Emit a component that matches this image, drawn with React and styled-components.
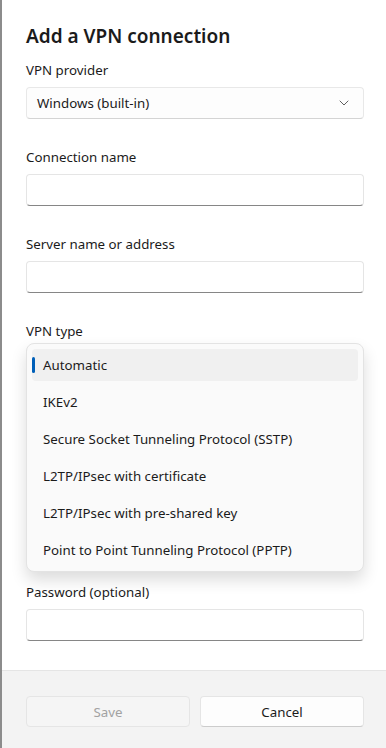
import React from 'react';
import styled, { createGlobalStyle } from 'styled-components';

const vpnTypes = [
  'Automatic',
  'IKEv2',
  'Secure Socket Tunneling Protocol (SSTP)',
  'L2TP/IPsec with certificate',
  'L2TP/IPsec with pre-shared key',
  'Point to Point Tunneling Protocol (PPTP)',
];

const GlobalStyle = createGlobalStyle`
  html, body {
    margin: 0;
    padding: 0;
    background: #ffffff;
  }
  body {
    font-family: "Segoe UI", "Noto Sans", "Open Sans", sans-serif;
    color: #1b1b1b;
  }
`;

const Dialog = styled.div`
  display: flex;
  flex-direction: column;
  height: 748px;
  border-left: 2px solid #8c8c8c;
  box-sizing: border-box;
  background: #ffffff;
`;

const Body = styled.div`
  position: relative;
  flex: 1;
  padding: 22px 22px 0 24px;
`;

const Title = styled.h1`
  margin: 0 0 10px;
  font-size: 19px;
  line-height: 28px;
  font-weight: 600;
`;

// fields under the open menu stay in the flow but are not painted
const Field = styled.div`
  display: flex;
  flex-direction: column;
  margin-bottom: 28px;
  visibility: ${(p) => (p.$covered ? 'hidden' : 'visible')};
`;

const Label = styled.label`
  font-size: 13.3px;
  line-height: 20px;
  margin-bottom: 7px;
`;

const TextBox = styled.div`
  height: 32px;
  box-sizing: border-box;
  border: 1px solid #e5e5e5;
  border-bottom: 1px solid #868686;
  border-radius: 4px;
  background: #ffffff;
`;

const Select = styled.div`
  display: flex;
  align-items: center;
  justify-content: space-between;
  height: 32px;
  box-sizing: border-box;
  padding: 0 14px 0 10px;
  border: 1px solid #e8e8e8;
  border-bottom-color: #d4d4d4;
  border-radius: 4px;
  background: #fdfdfd;
  font-size: 13.3px;
`;

const Menu = styled.div`
  position: absolute;
  left: 24px;
  right: 22px;
  top: 343px;
  padding: 5px;
  border: 1px solid #e3e3e3;
  border-radius: 8px;
  background: #fafafa;
  box-shadow: 0 8px 16px rgba(0, 0, 0, 0.14);
  display: flex;
  flex-direction: column;
  gap: 5px;
`;

const MenuItem = styled.div`
  position: relative;
  height: 32px;
  display: flex;
  align-items: center;
  padding-left: 11px;
  border-radius: 4px;
  font-size: 13.3px;
  background: ${(p) => (p.$selected ? '#f0f0f0' : 'transparent')};

  &::before {
    content: '';
    display: ${(p) => (p.$selected ? 'block' : 'none')};
    position: absolute;
    left: 0;
    top: 8px;
    width: 3px;
    height: 16px;
    border-radius: 2px;
    background: #005fb8;
  }
`;

const Footer = styled.div`
  display: flex;
  gap: 10px;
  height: 78px;
  box-sizing: border-box;
  padding: 25px 22px 0 24px;
  border-top: 1px solid #e5e5e5;
  background: #f3f3f3;
`;

const Button = styled.button`
  flex: 1;
  height: 31px;
  border-radius: 4px;
  font-family: inherit;
  font-size: 13.3px;
  border: 1px solid #e5e5e5;
  border-bottom-color: ${(p) => (p.disabled ? '#e5e5e5' : '#cccccc')};
  background: ${(p) => (p.disabled ? '#f5f5f5' : '#fdfdfd')};
  color: ${(p) => (p.disabled ? '#a2a2a2' : '#1b1b1b')};
`;

const Chevron = () => (
  <svg width="10" height="6" viewBox="0 0 10 6">
    <path d="M1 1l4 4 4-4" fill="none" stroke="#5f5f5f" strokeWidth="1" strokeLinecap="round" strokeLinejoin="round" />
  </svg>
);

const App = () => {
  return (
    <>
      <GlobalStyle />
      <Dialog>
        <Body>
          <Title>Add a VPN connection</Title>
          <Field>
            <Label>VPN provider</Label>
            <Select>
              <span>Windows (built-in)</span>
              <Chevron />
            </Select>
          </Field>
          <Field>
            <Label>Connection name</Label>
            <TextBox />
          </Field>
          <Field>
            <Label>Server name or address</Label>
            <TextBox />
          </Field>
          <Field>
            <Label>VPN type</Label>
            {/* the open menu sits over this select */}
            <Select />
          </Field>
          <Field $covered>
            <Label>Type of sign-in info</Label>
            <Select />
          </Field>
          <Field $covered>
            <Label>User name (optional)</Label>
            <TextBox />
          </Field>
          <Field>
            <Label>Password (optional)</Label>
            <TextBox />
          </Field>

          <Menu>
            {vpnTypes.map((t, i) => (
              <MenuItem key={t} $selected={i === 0}>
                {t}
              </MenuItem>
            ))}
          </Menu>
        </Body>
        <Footer>
          <Button disabled>Save</Button>
          <Button>Cancel</Button>
        </Footer>
      </Dialog>
    </>
  );
};

export default App;
